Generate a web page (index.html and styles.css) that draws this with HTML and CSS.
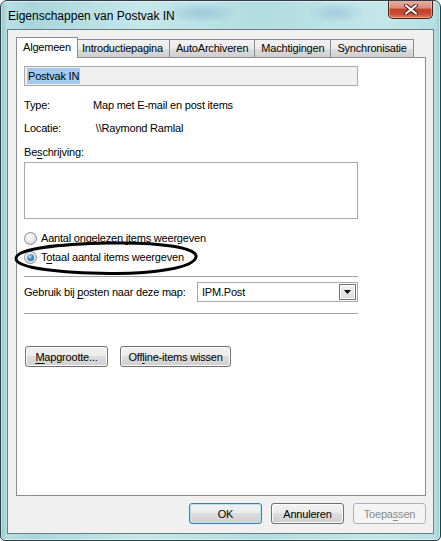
FILE: index.html
```html
<!DOCTYPE html>
<html lang="nl">
<head>
    <meta charset="UTF-8">
    <meta name="viewport" content="width=device-width, initial-scale=1.0">
    <title>Eigenschappen van Postvak IN</title>
    <link rel="stylesheet" href="styles.css">
</head>
<body>

<div class="window">
    <div class="titlebar">
        <span class="title">Eigenschappen van Postvak IN</span>
        <div class="close">
            <svg width="14" height="11" viewBox="0 0 14 11">
                <path d="M2 1.5 L12 9.5 M12 1.5 L2 9.5" stroke="#4a1a12" stroke-width="4" stroke-linecap="round"/>
                <path d="M2 1.5 L12 9.5 M12 1.5 L2 9.5" stroke="#ffffff" stroke-width="2.2" stroke-linecap="round"/>
            </svg>
        </div>
    </div>

    <div class="client">
        <div class="tabs">
            <div class="tab active">Algemeen</div>
            <div class="tab">Introductiepagina</div>
            <div class="tab">AutoArchiveren</div>
            <div class="tab">Machtigingen</div>
            <div class="tab">Synchronisatie</div>
        </div>

        <div class="panel">
            <div class="name-box"><span class="selected-text">Postvak IN</span></div>

            <div class="info-row first">
                <span class="info-key">Type:</span>
                <span>Map met E-mail en post items</span>
            </div>
            <div class="info-row">
                <span class="info-key">Locatie:</span>
                <span>&nbsp;\\Raymond Ramlal</span>
            </div>

            <div class="desc-label">Be<u>s</u>chrijving:</div>
            <div class="desc-box"></div>

            <div class="radios">
                <div class="radio-row">
                    <span class="radio"></span>
                    <span>Aantal ongelezen <u>i</u>tems weergeven</span>
                </div>
                <div class="radio-row second">
                    <span class="radio checked"></span>
                    <span>T<u>o</u>taal aantal items weergeven</span>
                </div>
                <!-- pen circle drawn around the chosen option -->
                <svg class="mark" width="190" height="36" viewBox="0 0 190 36">
                    <path d="M98 3 C 150 2, 186 8, 184 17 C 182 28, 140 34, 98 33.5 C 50 33, 4 28.5, 4 18.5 C 4 9, 46 4, 98 3 Z"
                          fill="none" stroke="#000" stroke-width="3"/>
                </svg>
            </div>

            <div class="separator first-sep"></div>

            <div class="combo-row">
                <span class="combo-label">Gebruik bij <u>p</u>osten naar deze map:</span>
                <div class="combo">
                    <span>IPM.Post</span>
                    <span class="combo-btn">
                        <svg width="7" height="4" viewBox="0 0 7 4"><path d="M0 0 H7 L3.5 4 Z" fill="#000"/></svg>
                    </span>
                </div>
            </div>

            <div class="separator second-sep"></div>

            <div class="panel-buttons">
                <button class="btn size-btn"><u>M</u>apgrootte...</button>
                <button class="btn wipe-btn">Off<u>l</u>ine-items wissen</button>
            </div>
        </div>

        <div class="actions">
            <button class="btn default">OK</button>
            <button class="btn">Annuleren</button>
            <button class="btn" disabled>Toepa<u>s</u>sen</button>
        </div>
    </div>
</div>

</body>
</html>
```

FILE: styles.css
```css
body {
    margin: 0;
    font-family: "Liberation Sans", Arial, sans-serif;
    font-size: 11px;
    letter-spacing: -0.2px;
    color: #000;
}
u {
    text-decoration-thickness: 1px;
    text-underline-offset: 2px;
}

/* window frame */
.window {
    width: 441px;
    height: 541px;
    box-sizing: border-box;
    border: 1px solid #2c3d44;
    border-radius: 7px 7px 5px 5px;
    display: flex;
    flex-direction: column;
    position: relative;
    overflow: hidden;
    background:
        radial-gradient(ellipse 40px 10px at 200px 12px, rgba(120, 170, 200, 0.45), transparent),
        radial-gradient(ellipse 30px 10px at 335px 12px, rgba(120, 170, 200, 0.4), transparent),
        linear-gradient(to right, #8ec6cd 0px, #b9dfe3 6px, #a8d6dc 30px, #c6e7ea 140px, #b2dde1 260px, #c4e6e9 380px, #b6dfe3 434px, #8bc4cb 441px);
    box-shadow: inset 0 0 0 1px rgba(255, 255, 255, 0.5);
}
.titlebar {
    height: 28px;
    display: flex;
    align-items: center;
    padding-left: 7px;
    position: relative;
}
.title {
    font-size: 12px;
    letter-spacing: 0;
    margin-top: 1px;
}
.close {
    position: absolute;
    top: -1px;
    right: 7px;
    width: 45px;
    height: 19px;
    box-sizing: border-box;
    border: 1px solid #4a221b;
    border-top: 0;
    border-radius: 0 0 5px 5px;
    background: linear-gradient(#eab3a5 0%, #d98b78 45%, #c2432b 50%, #c94a30 75%, #de7a55 100%);
    box-shadow: inset 0 0 0 1px rgba(255, 220, 210, 0.45);
    display: flex;
    align-items: center;
    justify-content: center;
}

/* dialog body */
.client {
    flex: 1;
    margin: 0 6px 6px;
    background: #f0f0f0;
    border: 1px solid #6a7c84;
    padding: 7px 7px 9px 8px;
    display: flex;
    flex-direction: column;
}
.tabs {
    display: flex;
    align-items: flex-end;
    height: 21px;
    position: relative;
    z-index: 1;
}
.tab {
    height: 17px;
    line-height: 17px;
    padding: 0 6px;
    margin: 0 0 1px -1px;
    border: 1px solid #898c95;
    border-bottom: 0;
    background: linear-gradient(#f2f2f2 0%, #ebebeb 50%, #dddddd 51%, #cfcfcf 100%);
    white-space: nowrap;
}
.tab.active {
    height: 20px;
    line-height: 19px;
    padding: 0 6px;
    margin: 0 -2px 0 0;
    background: #fff;
    position: relative;
    z-index: 2;
}
.panel {
    flex: 1;
    margin-top: -1px;
    background: #fff;
    border: 1px solid #898c95;
    padding: 8px 7px;
    display: flex;
    flex-direction: column;
    align-items: flex-start;
}

.name-box {
    width: 334px;
    height: 20px;
    box-sizing: border-box;
    border: 1px solid #a9a9a9;
    background: #f0f0f0;
    padding: 1px 2px;
}
.selected-text {
    display: inline-block;
    line-height: 16px;
    padding: 0 1px;
    background: #a3c9ee;
}

.info-row {
    display: flex;
    height: 14px;
    line-height: 14px;
    margin-top: 9px;
}
.info-row.first {
    margin-top: 12px;
}
.info-key {
    width: 69px;
}

.desc-label {
    height: 14px;
    line-height: 14px;
    margin-top: 10px;
}
.desc-box {
    width: 334px;
    height: 57px;
    box-sizing: border-box;
    margin-top: 3px;
    border: 1px solid #a9a9a9;
    background: #fff;
}

.radios {
    position: relative;
    margin-top: 12px;
}
.radio-row {
    display: flex;
    align-items: center;
    gap: 4px;
    height: 14px;
    line-height: 14px;
}
.radio-row.second {
    margin-top: 5px;
}
.radio {
    width: 13px;
    height: 13px;
    box-sizing: border-box;
    border-radius: 50%;
    border: 1px solid #8e8f8f;
    background: radial-gradient(circle at 40% 35%, #ffffff 0%, #ebebeb 45%, #c4c4c4 100%);
    position: relative;
}
.radio.checked::after {
    content: "";
    position: absolute;
    left: 2px;
    top: 2px;
    width: 7px;
    height: 7px;
    border-radius: 50%;
    background: radial-gradient(circle at 40% 35%, #b8e2fb 0%, #3f8fd0 45%, #174f8f 100%);
}
.mark {
    position: absolute;
    left: -12px;
    top: 9px;
}

.separator {
    width: 334px;
    height: 1px;
    background: #a0a0a0;
}
.first-sep {
    margin-top: 12px;
}
.second-sep {
    margin-top: 11px;
}

.combo-row {
    display: flex;
    align-items: center;
    margin-top: 5px;
}
.combo-label {
    width: 173px;
    white-space: nowrap;
}
.combo {
    width: 161px;
    height: 20px;
    box-sizing: border-box;
    border: 1px solid #a9a9a9;
    display: flex;
    align-items: center;
    justify-content: space-between;
    padding: 0 1px 0 4px;
}
.combo-btn {
    width: 17px;
    height: 16px;
    box-sizing: border-box;
    border: 1px solid #707070;
    box-shadow: inset 0 0 0 1px #ffffff;
    background: linear-gradient(#f2f2f2, #dcdcdc);
    display: flex;
    align-items: center;
    justify-content: center;
}

.panel-buttons {
    display: flex;
    gap: 12px;
    margin-top: 32px;
    padding-left: 1px;
}

/* Win7 push buttons */
.btn {
    height: 21px;
    padding: 0;
    font-family: inherit;
    font-size: inherit;
    letter-spacing: inherit;
    color: #000;
    border: 1px solid #707070;
    border-radius: 3px;
    background: linear-gradient(#f2f2f2 0%, #ebebeb 49%, #dddddd 50%, #cfcfcf 100%);
    box-shadow: inset 0 0 0 1px #fbfbfb;
}
.size-btn {
    width: 83px;
}
.wipe-btn {
    width: 111px;
}
.btn.default {
    border-color: #3c7fb1;
    box-shadow: inset 0 0 0 1px #b4e3f7;
}
.btn:disabled {
    color: #8a8a8a;
    border-color: #adb2b5;
    background: #f4f4f4;
    box-shadow: none;
}

.actions {
    display: flex;
    justify-content: flex-end;
    gap: 9px;
    margin-top: 7px;
}
.actions .btn {
    width: 73px;
}
```
